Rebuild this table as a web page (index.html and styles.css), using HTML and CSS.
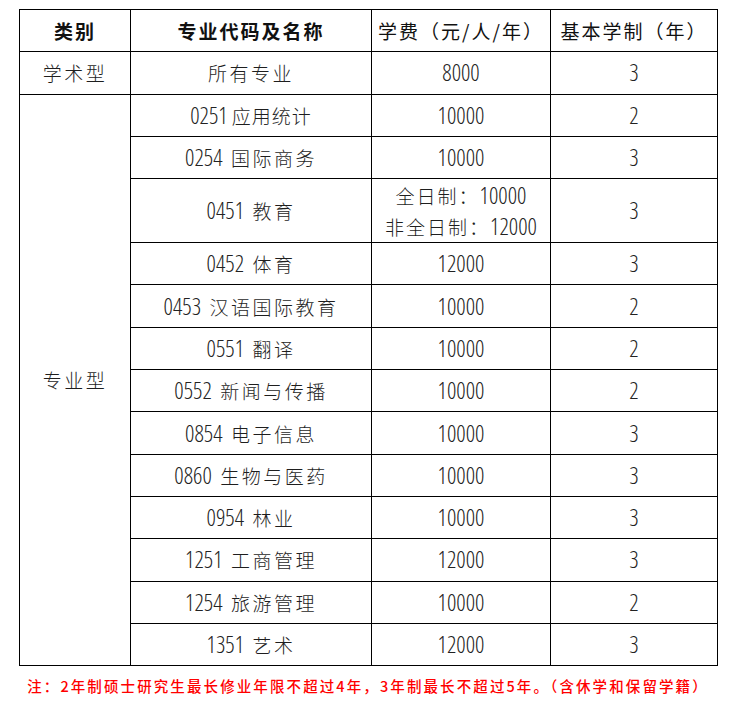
FILE: index.html
```html
<!DOCTYPE html>
<html lang="zh-CN">
<head>
<meta charset="utf-8">
<title>学费及学制</title>
<link rel="stylesheet" href="styles.css">
</head>
<body>
<div class="wrap">
<table class="fees">
  <colgroup>
    <col class="c1"><col class="c2"><col class="c3"><col class="c4">
  </colgroup>
  <thead>
    <tr class="row head">
      <th>类别</th>
      <th>专业代码及名称</th>
      <th class="lite">学费（元/人/年）</th>
      <th class="lite">基本学制（年）</th>
    </tr>
  </thead>
  <tbody>
    <tr class="row">
      <td class="cat">学术型</td>
      <td><span class="cn">所有专业</span></td>
      <td><span class="num">8000</span></td>
      <td><span class="num">3</span></td>
    </tr>
    <tr class="row">
      <td class="cat prof" rowspan="13">专业型</td>
      <td><span class="num">0251</span> <span class="cn2">应用统计</span></td>
      <td><span class="num">10000</span></td>
      <td><span class="num">2</span></td>
    </tr>
    <tr class="row">
      <td><span class="num">0254</span>&nbsp;&nbsp;<span class="cn">国际商务</span></td>
      <td><span class="num">10000</span></td>
      <td><span class="num">3</span></td>
    </tr>
    <tr class="row tall">
      <td><span class="num">0451</span>&nbsp;&nbsp;<span class="cn">教育</span></td>
      <td class="two"><div><span class="cn">全日制：</span><span class="num">10000</span></div><div><span class="cn">非全日制：</span><span class="num">12000</span></div></td>
      <td><span class="num">3</span></td>
    </tr>
    <tr class="row">
      <td><span class="num">0452</span>&nbsp;&nbsp;<span class="cn">体育</span></td>
      <td><span class="num">12000</span></td>
      <td><span class="num">3</span></td>
    </tr>
    <tr class="row">
      <td><span class="num">0453</span>&nbsp;&nbsp;<span class="cn">汉语国际教育</span></td>
      <td><span class="num">10000</span></td>
      <td><span class="num">2</span></td>
    </tr>
    <tr class="row">
      <td><span class="num">0551</span>&nbsp;&nbsp;<span class="cn">翻译</span></td>
      <td><span class="num">10000</span></td>
      <td><span class="num">2</span></td>
    </tr>
    <tr class="row">
      <td><span class="num">0552</span>&nbsp;&nbsp;<span class="cn">新闻与传播</span></td>
      <td><span class="num">10000</span></td>
      <td><span class="num">2</span></td>
    </tr>
    <tr class="row">
      <td><span class="num">0854</span>&nbsp;&nbsp;<span class="cn">电子信息</span></td>
      <td><span class="num">10000</span></td>
      <td><span class="num">3</span></td>
    </tr>
    <tr class="row">
      <td><span class="num">0860</span>&nbsp;&nbsp;<span class="cn">生物与医药</span></td>
      <td><span class="num">10000</span></td>
      <td><span class="num">3</span></td>
    </tr>
    <tr class="row">
      <td><span class="num">0954</span>&nbsp;&nbsp;<span class="cn">林业</span></td>
      <td><span class="num">10000</span></td>
      <td><span class="num">3</span></td>
    </tr>
    <tr class="row">
      <td><span class="num">1251</span>&nbsp;&nbsp;<span class="cn">工商管理</span></td>
      <td><span class="num">12000</span></td>
      <td><span class="num">3</span></td>
    </tr>
    <tr class="row">
      <td><span class="num">1254</span>&nbsp;&nbsp;<span class="cn">旅游管理</span></td>
      <td><span class="num">10000</span></td>
      <td><span class="num">2</span></td>
    </tr>
    <tr class="row">
      <td><span class="num">1351</span>&nbsp;&nbsp;<span class="cn">艺术</span></td>
      <td><span class="num">12000</span></td>
      <td><span class="num">3</span></td>
    </tr>
  </tbody>
</table>
<p class="note">注：2年制硕士研究生最长修业年限不超过4年，3年制最长不超过5年。（含休学和保留学籍）</p>
</div>
</body>
</html>
```

FILE: styles.css
```css
html, body {
  margin: 0;
  padding: 0;
  background: #ffffff;
}

.wrap {
  width: 698px;
  margin: 9px 0 0 19px;
}

.fees {
  width: 698px;
  border-collapse: collapse;
  table-layout: fixed;
  font-family: "Noto Sans CJK SC", sans-serif;
  color: #1e1e1e;
}

.c1 { width: 111px; }
.c2 { width: 241px; }
.c3 { width: 179px; }
.c4 { width: 167px; }

.fees th,
.fees td {
  border: 1px solid #000;
  padding: 0;
  text-align: center;
  vertical-align: middle;
  font-size: 19px;
  font-weight: 300;
  line-height: 24px;
  white-space: nowrap;
}

.row { height: 42.3px; }
.row.tall { height: 64px; }

.fees th {
  font-weight: 700;
  color: #111;
  letter-spacing: 2px;
}

.fees th.lite {
  font-weight: 400;
  color: #111;
}

.fees .num {
  font-family: "Open Sans", "Liberation Sans", sans-serif;
  font-stretch: 85%;
  font-weight: 300;
  font-size: 23px;
  letter-spacing: 0;
  color: #222;
}

.fees .cn {
  letter-spacing: 2.5px;
}

.fees .cn2 {
  letter-spacing: 1px;
}

.fees .cat {
  letter-spacing: 2.5px;
}

.fees td.prof {
  padding-bottom: 0;
}

.fees .two div {
  line-height: 31px;
}

.fees .two .cn {
  letter-spacing: 2px;
}

.note {
  margin: 10px 0 0 0;
  text-align: center;
  color: #ff0000;
  font-family: "Noto Sans CJK SC", sans-serif;
  font-weight: 500;
  font-size: 14.5px;
  letter-spacing: 2.1px;
  line-height: 20px;
  white-space: nowrap;
}
```
